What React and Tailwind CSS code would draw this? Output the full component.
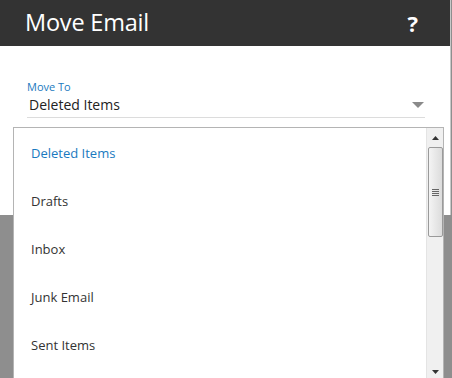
import React from "react";

const folders = ["Deleted Items", "Drafts", "Inbox", "Junk Email", "Sent Items"];

const App = () => {
  return (
    <div
      className="relative w-[452px] h-[378px] overflow-hidden bg-[#8e8e8e]"
      style={{ fontFamily: '"Open Sans", "Noto Sans", sans-serif' }}
    >
      {/* Dialog */}
      <div className="w-[451px] h-[215px] bg-white border-r border-[#c8c8c8]">
        <div className="h-[46px] bg-[#333333] flex items-center justify-between pl-[25px] pr-[32px]">
          <h1 className="text-[23.5px] text-white leading-none tracking-[-0.2px]">Move Email</h1>
          <span className="text-[22px] font-bold text-white leading-none">?</span>
        </div>
        <div className="px-[27px] pt-[35px]">
          <div className="text-[11px] text-[#1a7ac0] leading-none">Move To</div>
          <div className="flex items-center justify-between border-b border-[#dcdcdc] pl-[2px] pb-[2px] mt-[3px] w-[398px]">
            <span className="text-[14px] text-[#222] leading-[20px]">Deleted Items</span>
            <svg width="12" height="6" viewBox="0 0 12 6" className="mr-[1px]">
              <path d="M0 0 L12 0 L6 6 Z" fill="#8a8a8a" />
            </svg>
          </div>
        </div>
      </div>

      {/* Dropdown list */}
      <div className="absolute left-[13px] top-[127px] w-[431px] h-[260px] bg-white border border-[#b4b4b4] flex">
        <ul className="flex-1 pt-[2px]">
          {folders.map((f, i) => (
            <li
              key={f}
              className={`h-[48px] flex items-center pl-[17px] text-[13px] ${
                i === 0 ? "text-[#1a7ac0]" : "text-[#333]"
              }`}
            >
              {f}
            </li>
          ))}
        </ul>
        {/* Scrollbar */}
        <div className="w-[17px] bg-[#f0f0f0] border-l border-[#e4e4e4] flex flex-col items-center">
          <div className="h-[19px] flex items-center justify-center">
            <svg width="7" height="4" viewBox="0 0 7 4">
              <path d="M3.5 0 L7 4 L0 4 Z" fill="#333" />
            </svg>
          </div>
          <div className="w-[15px] h-[90px] rounded-[2px] border border-[#9a9a9a] bg-gradient-to-r from-[#f4f4f4] to-[#dcdcdc] flex flex-col items-center justify-center gap-[1px]">
            <div className="w-[7px] h-[1px] bg-[#666]" />
            <div className="w-[7px] h-[1px] bg-[#666]" />
            <div className="w-[7px] h-[1px] bg-[#666]" />
            <div className="w-[7px] h-[1px] bg-[#666]" />
          </div>
          <div className="flex-1" />
          <div className="h-[20px] flex items-start pt-[4px] justify-center">
            <svg width="7" height="4" viewBox="0 0 7 4">
              <path d="M0 0 L7 0 L3.5 4 Z" fill="#333" />
            </svg>
          </div>
        </div>
      </div>
    </div>
  );
};

export default App;
